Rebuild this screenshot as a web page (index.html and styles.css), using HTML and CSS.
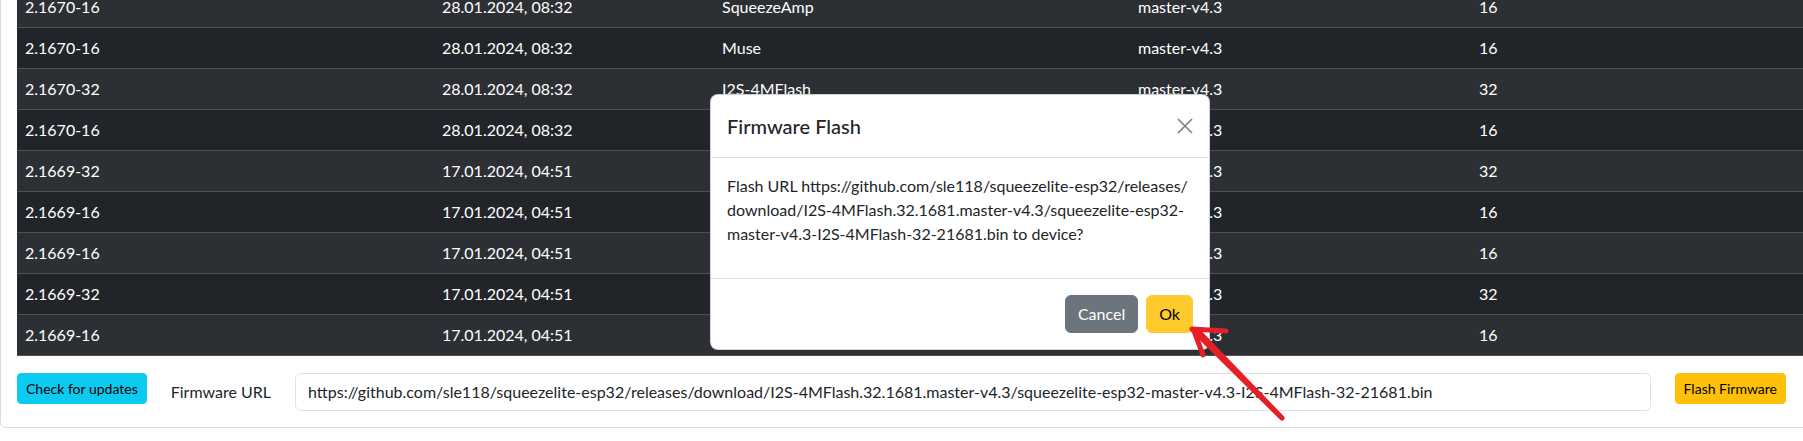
FILE: index.html
```html
<!DOCTYPE html>
<html lang="en">
<head>
  <meta charset="UTF-8" />
  <title>Firmware</title>
  <link rel="stylesheet" href="styles.css">
</head>
<body>
  <div class="page">
    <div class="card">
      <div class="card-body">
        <table class="fw-table">
          <colgroup>
            <col class="c-ver">
            <col class="c-date">
            <col class="c-board">
            <col class="c-branch">
            <col>
          </colgroup>
          <tbody>
            <tr><td>2.1670-16</td><td>28.01.2024, 08:32</td><td>SqueezeAmp</td><td>master-v4.3</td><td>16</td></tr>
            <tr><td>2.1670-16</td><td>28.01.2024, 08:32</td><td>Muse</td><td>master-v4.3</td><td>16</td></tr>
            <tr><td>2.1670-32</td><td>28.01.2024, 08:32</td><td>I2S-4MFlash</td><td>master-v4.3</td><td>32</td></tr>
            <tr><td>2.1670-16</td><td>28.01.2024, 08:32</td><td></td><td>master-v4.3</td><td>16</td></tr>
            <tr><td>2.1669-32</td><td>17.01.2024, 04:51</td><td></td><td>master-v4.3</td><td>32</td></tr>
            <tr><td>2.1669-16</td><td>17.01.2024, 04:51</td><td></td><td>master-v4.3</td><td>16</td></tr>
            <tr><td>2.1669-16</td><td>17.01.2024, 04:51</td><td></td><td>master-v4.3</td><td>16</td></tr>
            <tr><td>2.1669-32</td><td>17.01.2024, 04:51</td><td></td><td>master-v4.3</td><td>32</td></tr>
            <tr><td>2.1669-16</td><td>17.01.2024, 04:51</td><td></td><td>master-v4.3</td><td>16</td></tr>
          </tbody>
        </table>

        <div class="flash-row">
          <button class="btn btn-sm btn-info">Check for updates</button>
          <label class="url-label" for="fwurl">Firmware URL</label>
          <input class="url-input" id="fwurl" type="text" value="https://github.com/sle118/squeezelite-esp32/releases/download/I2S-4MFlash.32.1681.master-v4.3/squeezelite-esp32-master-v4.3-I2S-4MFlash-32-21681.bin">
          <button class="btn btn-sm btn-warning">Flash Firmware</button>
        </div>
      </div>
    </div>
  </div>

  <!-- confirm dialog -->
  <div class="modal-content">
    <div class="modal-header">
      <h5 class="modal-title">Firmware Flash</h5>
      <button class="btn-close" aria-label="Close">
        <svg width="16" height="16" viewBox="0 0 16 16"><path d="M1 1L15 15M15 1L1 15" stroke="#7f7f7f" stroke-width="1.6" fill="none"/></svg>
      </button>
    </div>
    <div class="modal-body">
      <p>Flash URL https://github.com/sle118/squeezelite-esp32/releases/ download/I2S-4MFlash.32.1681.master-v4.3/squeezelite-esp32- master-v4.3-I2S-4MFlash-32-21681.bin to device?</p>
    </div>
    <div class="modal-footer">
      <button class="btn btn-secondary">Cancel</button>
      <button class="btn btn-ok">Ok</button>
    </div>
  </div>

  <!-- hand drawn pointer -->
  <svg class="pointer" width="110" height="105" viewBox="0 0 110 105">
    <g stroke="#e61e28" stroke-width="5" stroke-linecap="round" fill="none">
      <path d="M13 10L102 98"/>
      <path d="M19 12L100 96"/>
      <path d="M12 9L46 11"/>
      <path d="M14 11L23 35"/>
    </g>
  </svg>
</body>
</html>
```

FILE: styles.css
```css
body {
  margin: 0;
  background: #fff;
  font-family: 'Lato', sans-serif;
  font-size: 16px;
  line-height: 1.5;
  color: #212529;
  overflow: hidden;
}

/* page is scrolled a bit, first row is cut */
.page {
  margin-top: -30px;
}

.card {
  margin-right: -20px;
  border: 1px solid #dcdcdc;
  border-radius: 6px;
  background: #fff;
}

.card-body {
  padding: 16px;
}

.fw-table {
  width: 100%;
  border-collapse: collapse;
  table-layout: fixed;
  margin-bottom: 17px;
  color: #fff;
  background: #212529;
}

.c-ver { width: 417px; }
.c-date { width: 280px; }
.c-board { width: 416px; }
.c-branch { width: 341px; }

.fw-table td {
  padding: 8px;
  height: 24px;
  border-bottom: 1px solid #4d5154;
  white-space: nowrap;
}

.fw-table tr:nth-child(odd) td {
  background: #2c3034;
}

.fw-table tr:nth-child(even) td {
  background: #212529;
}

.flash-row {
  display: flex;
  align-items: flex-start;
  gap: 24px;
  margin-right: 20px;
}

.btn {
  font-family: inherit;
  font-size: 16px;
  line-height: 24px;
  padding: 6px 12px;
  border: 1px solid transparent;
  border-radius: 6px;
  color: #000;
  cursor: pointer;
}

.btn-sm {
  font-size: 14px;
  line-height: 21px;
  padding: 4px 8px;
  border-radius: 4px;
}

.btn-info {
  background: #0dcaf0;
  border-color: #0dcaf0;
}

.btn-warning {
  background: #ffc107;
  border-color: #ffc107;
}

.url-label {
  padding: 7px 0;
}

.url-input {
  flex: 1;
  font-family: inherit;
  font-size: 16px;
  line-height: 24px;
  padding: 6px 12px;
  color: #212529;
  border: 1px solid #dee2e6;
  border-radius: 6px;
  outline: none;
}

/* dialog sits over the table */
.modal-content {
  position: absolute;
  left: 710px;
  top: 94px;
  width: 500px;
  box-sizing: border-box;
  background: #fff;
  border: 1px solid rgba(0, 0, 0, 0.175);
  border-radius: 8px;
}

.modal-header {
  display: flex;
  align-items: center;
  padding: 16px;
  border-bottom: 1px solid #dee2e6;
}

.modal-title {
  margin: 0;
  font-size: 20px;
  font-weight: 500;
  line-height: 30px;
}

.btn-close {
  margin: -8px -4px -8px auto;
  padding: 4px;
  width: 24px;
  height: 24px;
  border: 0;
  background: transparent;
  display: flex;
  cursor: pointer;
}

.modal-body {
  padding: 16px;
}

.modal-body p {
  margin: 0 0 16px;
}

.modal-footer {
  display: flex;
  justify-content: flex-end;
  padding: 12px;
  border-top: 1px solid #dee2e6;
}

.modal-footer .btn {
  margin: 4px;
}

.btn-secondary {
  background: #6c757d;
  border-color: #6c757d;
  color: #fff;
}

.btn-ok {
  background: #ffca2c;
  border-color: #ffca2c;
}

.pointer {
  position: absolute;
  left: 1180px;
  top: 320px;
}
```
